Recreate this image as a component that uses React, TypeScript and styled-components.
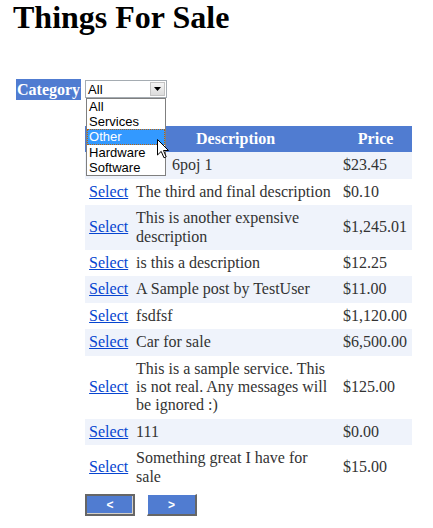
import React from "react";
import styled, { createGlobalStyle } from "styled-components";

const GlobalStyle = createGlobalStyle`
  body {
    margin: 0;
    background: #fff;
    font-family: "Liberation Serif", "Times New Roman", serif;
  }
`;

const Page = styled.div`
  padding-left: 13px;
`;

const Title = styled.h1`
  margin: 0 0 45px 0;
  font-size: 32px;
  line-height: 34px;
  font-weight: 700;
  color: #000;
`;

const FilterRow = styled.div`
  display: flex;
  align-items: flex-start;
  gap: 4px;
  margin-left: 3px;
`;

const Label = styled.span`
  background: #507cd1;
  color: #fff;
  font-weight: 700;
  font-size: 16px;
  line-height: 21px;
  height: 21px;
  padding: 0 1px;
`;

const Content = styled.div`
  position: relative;
  display: flex;
  flex-direction: column;
`;

const SelectBox = styled.div`
  margin-top: 1px;
  width: 82px;
  height: 18px;
  box-sizing: border-box;
  border: 1px solid #a5acb2;
  background: #fff;
  display: flex;
  align-items: center;
  justify-content: space-between;
  padding: 0 1px 0 2px;
  font-family: "Liberation Sans", Arial, sans-serif;
  font-size: 13px;
  color: #000;
`;

const ArrowButton = styled.span`
  width: 15px;
  height: 14px;
  box-sizing: border-box;
  border: 1px solid #c3c3c3;
  background: linear-gradient(#f4f4f4, #dcdcdc);
  display: flex;
  align-items: center;
  justify-content: center;
`;

const DropList = styled.ul`
  position: absolute;
  top: 19px;
  left: 1px;
  width: 80px;
  height: 78px;
  box-sizing: border-box;
  margin: 0;
  padding: 0;
  list-style: none;
  border: 1px solid #7f7f7f;
  background: #fff;
  z-index: 2;
  font-family: "Liberation Sans", Arial, sans-serif;
  font-size: 13px;
`;

const Option = styled.li<{ $active?: boolean }>`
  height: 15.2px;
  line-height: 15px;
  padding-left: 2px;
  box-sizing: border-box;
  color: ${(p) => (p.$active ? "#fff" : "#000")};
  background: ${(p) => (p.$active ? "#3399ff" : "transparent")};
  outline: ${(p) => (p.$active ? "1px dotted #b8620d" : "none")};
  outline-offset: -1px;
`;

const Cursor = styled.svg`
  position: absolute;
  left: 72px;
  top: 60px;
  z-index: 3;
`;

const Grid = styled.table`
  margin-top: 28px;
  width: 327px;
  table-layout: fixed;
  border-collapse: collapse;
  color: #333;
  font-size: 16px;
  line-height: 18.4px;
`;

const HeadCell = styled.th`
  background: #507cd1;
  color: #fff;
  font-weight: 700;
  text-align: center;
  padding: 4px;
`;

const Row = styled.tr<{ $alt: boolean }>`
  background: ${(p) => (p.$alt ? "#fff" : "#eff3fb")};
`;

const Cell = styled.td`
  padding: 4px;
  vertical-align: middle;
`;

const SelectLink = styled.a`
  color: #0645d0;
  text-decoration: underline;
  cursor: pointer;
`;

const PagerCell = styled.td`
  padding: 4px 0;
  background: #fff;
`;

const Pager = styled.div`
  display: flex;
  gap: 12px;
`;

const PagerButton = styled.button<{ $pressed?: boolean }>`
  width: 50px;
  height: 22px;
  box-sizing: border-box;
  padding: 0;
  background: #507cd1;
  color: #fff;
  font-family: "Liberation Sans", Arial, sans-serif;
  font-weight: 700;
  font-size: 12px;
  border-style: solid;
  border-width: ${(p) => (p.$pressed ? "2px" : "1px 2px 2px 1px")};
  border-color: ${(p) =>
    p.$pressed ? "#666" : "#fff #666 #666 #fff"};
  box-shadow: ${(p) => (p.$pressed ? "inset -1px -1px 0 #d4d0c8" : "none")};
`;

const items = [
  { desc: "\u00a0".repeat(9) + "6poj 1", price: "$23.45" },
  { desc: "The third and final description", price: "$0.10" },
  { desc: "This is another expensive description", price: "$1,245.01" },
  { desc: "is this a description", price: "$12.25" },
  { desc: "A Sample post by TestUser", price: "$11.00" },
  { desc: "fsdfsf", price: "$1,120.00" },
  { desc: "Car for sale", price: "$6,500.00" },
  {
    desc: "This is a sample service. This is not real. Any messages will be ignored :)",
    price: "$125.00",
  },
  { desc: "111", price: "$0.00" },
  { desc: "Something great I have for sale", price: "$15.00" },
];

const categories = ["All", "Services", "Other", "Hardware", "Software"];

export default function App() {
  return (
    <Page>
      <GlobalStyle />
      <Title>Things For Sale</Title>
      <FilterRow>
        <Label>Category</Label>
        <Content>
          <SelectBox>
            <span>All</span>
            <ArrowButton>
              <svg width="7" height="4" viewBox="0 0 7 4">
                <path d="M0 0 H7 L3.5 4 Z" fill="#000" />
              </svg>
            </ArrowButton>
          </SelectBox>
          <DropList>
            {categories.map((c) => (
              <Option key={c} $active={c === "Other"}>
                {c}
              </Option>
            ))}
          </DropList>
          <Cursor width="13" height="20" viewBox="0 0 13 20">
            <path
              d="M0.5 0.5 V16 L4.2 12.4 L7 18.8 L9.2 17.8 L6.5 11.5 H11.5 Z"
              fill="#fff"
              stroke="#000"
              strokeWidth="1"
              strokeLinejoin="miter"
            />
          </Cursor>
          <Grid>
            <colgroup>
              <col style={{ width: 47 }} />
              <col style={{ width: 207 }} />
              <col style={{ width: 73 }} />
            </colgroup>
            <thead>
              <tr>
                <HeadCell>&nbsp;</HeadCell>
                <HeadCell>Description</HeadCell>
                <HeadCell>Price</HeadCell>
              </tr>
            </thead>
            <tbody>
              {items.map((it, i) => (
                <Row key={i} $alt={i % 2 === 1}>
                  <Cell>
                    <SelectLink>Select</SelectLink>
                  </Cell>
                  <Cell>{it.desc}</Cell>
                  <Cell>{it.price}</Cell>
                </Row>
              ))}
              <tr>
                <PagerCell colSpan={3}>
                  <Pager>
                    <PagerButton $pressed>&lt;</PagerButton>
                    <PagerButton>&gt;</PagerButton>
                  </Pager>
                </PagerCell>
              </tr>
            </tbody>
          </Grid>
        </Content>
      </FilterRow>
    </Page>
  );
}
